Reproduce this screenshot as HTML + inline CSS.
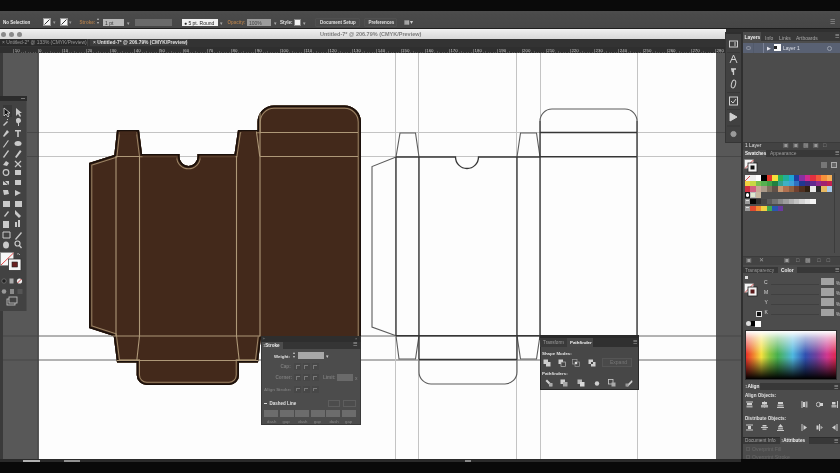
<!DOCTYPE html>
<html><head><meta charset="utf-8">
<style>
*{margin:0;padding:0;box-sizing:border-box}
html,body{width:840px;height:473px;overflow:hidden;background:#0a0a0a;font-family:"Liberation Sans",sans-serif;color:#cfcfcf}
.a{position:absolute}
.t{position:absolute;white-space:nowrap;font-size:5px;line-height:6px}
</style></head><body>
<div class="a" style="left:0;top:0;width:840px;height:473px;overflow:hidden;filter:blur(0.4px)">

<!-- control bar -->
<div class="a" style="left:0;top:11px;width:840px;height:18px;background:linear-gradient(#4e4e4e 0px,#4a4a4a 3px,#464646 100%)"></div><div class="a" style="left:0;top:28px;width:840px;height:1px;background:#1e1e1e"></div>
<!-- title bar -->
<div class="a" style="left:0;top:29px;width:726px;height:10px;background:linear-gradient(#f0f0f0,#d8d8d8)"></div><div class="a" style="left:0;top:39px;width:726px;height:1px;background:#151515"></div>
<!-- tab bar -->
<div class="a" style="left:0;top:39px;width:726px;height:8px;background:#333333"></div>
<!-- ruler bg -->
<div class="a" style="left:0;top:47px;width:726px;height:6px;background:#2f2f2f"></div>

<!-- control bar contents -->
<div class="t" style="left:3px;top:19.5px;font-size:4.5px;color:#e8e8e8;font-weight:bold">No Selection</div>
<div class="a" style="left:43px;top:18.3px;width:8px;height:8px;background:#f4f4f4;border:0.6px solid #999"></div>
<svg class="a" style="left:43px;top:18.3px" width="8" height="8"><path d="M1.5,6.5L6.5,1.5" stroke="#333" stroke-width="1"/></svg>
<div class="t" style="left:52.5px;top:19.5px;font-size:4.5px;color:#999">&#9662;</div>
<div class="a" style="left:59.5px;top:18.3px;width:8px;height:8px;background:#f4f4f4;border:0.6px solid #999"></div>
<svg class="a" style="left:59.5px;top:18.3px" width="8" height="8"><path d="M1.5,6.5L6.5,1.5" stroke="#333" stroke-width="1"/></svg>
<div class="t" style="left:69px;top:19.5px;font-size:4.5px;color:#999">&#9662;</div>
<div class="t" style="left:79.5px;top:19.5px;font-size:4.6px;color:#a87a4c;font-weight:bold">Stroke:</div>
<div class="t" style="left:97px;top:17px;font-size:4px;line-height:4px;color:#bbb">&#9652;<br>&#9662;</div>
<div class="a" style="left:103px;top:19px;width:21px;height:7px;background:#b8b8b8"></div>
<div class="t" style="left:105px;top:19.5px;font-size:5px;color:#333">1 pt</div>
<div class="t" style="left:126.5px;top:19.5px;font-size:5px;color:#aaa">&#9662;</div>
<div class="a" style="left:135px;top:19px;width:37px;height:7px;background:#6a6a6a"></div>
<div class="a" style="left:182px;top:19px;width:35.5px;height:7px;background:#f2f2f2"></div>
<div class="t" style="left:184px;top:19.5px;font-size:5px;color:#222">&#9679; 5 pt. Round</div>
<div class="t" style="left:219.5px;top:19.5px;font-size:5px;color:#aaa">&#9662;</div>
<div class="t" style="left:227.5px;top:19.5px;font-size:4.5px;color:#a87a4c;font-weight:bold">Opacity:</div>
<div class="a" style="left:247px;top:19px;width:24px;height:7px;background:#9c9c9c"></div>
<div class="t" style="left:249px;top:19.5px;font-size:5px;color:#444">100%</div>
<div class="t" style="left:273.5px;top:19.5px;font-size:5px;color:#aaa">&#9662;</div>
<div class="t" style="left:280px;top:19.5px;font-size:4.6px;color:#e0e0e0;font-weight:bold">Style:</div>
<div class="a" style="left:294px;top:19px;width:7px;height:7px;background:#f2f2f2;border:1px solid #888"></div>
<div class="t" style="left:302.5px;top:19.5px;font-size:5px;color:#aaa">&#9662;</div>
<div class="a" style="left:315px;top:17.5px;width:45px;height:9px;background:#4a4a4a;border:1px solid #505050;border-radius:1px"></div>
<div class="t" style="left:320px;top:19.5px;font-size:4.5px;color:#e0e0e0;font-weight:bold">Document Setup</div>
<div class="a" style="left:363.5px;top:17.5px;width:33px;height:9px;background:#4a4a4a;border:1px solid #505050;border-radius:1px"></div>
<div class="t" style="left:368.5px;top:19.5px;font-size:4.5px;color:#e0e0e0;font-weight:bold">Preferences</div>
<div class="t" style="left:404px;top:18.5px;font-size:6px;color:#ccc">&#9638;&#9662;</div>
<div class="t" style="left:830px;top:18.5px;font-size:6px;color:#aaa">&#9776;</div>

<!-- title bar contents -->
<div class="a" style="left:0.5px;top:31.5px;width:5px;height:5px;border-radius:50%;background:#8a8a8a"></div>
<div class="a" style="left:8.5px;top:31.5px;width:5px;height:5px;border-radius:50%;background:#8a8a8a"></div>
<div class="a" style="left:16.5px;top:31.5px;width:5px;height:5px;border-radius:50%;background:#8a8a8a"></div>
<div class="t" style="left:320px;top:31px;font-size:5.5px;color:#7c7c7c;font-weight:bold">Untitled-7* @ 206.79% (CMYK/Preview)</div>

<!-- tabs -->
<div class="a" style="left:0;top:39px;width:88px;height:7px;background:#2a2a2a;border-right:1px solid #444"></div>
<div class="t" style="left:2px;top:40px;font-size:4.9px;color:#9a9a9a">&#215; Untitled-2* @ 133% (CMYK/Preview)</div>
<div class="a" style="left:90px;top:39px;width:98px;height:7px;background:#3c3c3c"></div>
<div class="t" style="left:93px;top:40px;font-size:4.9px;color:#e0e0e0">&#215; <b>Untitled-7* @ 206.79% (CMYK/Preview)</b></div>

<!-- ruler --><div class="t" style="left:14.8px;top:47.6px;font-size:4.4px;color:#c8c8c8">10</div><div class="a" style="left:13.3px;top:49px;width:0.8px;height:4px;background:#6a6a6a"></div><div class="a" style="left:15.7px;top:51.8px;width:0.7px;height:1.2px;background:#555"></div><div class="a" style="left:18.1px;top:51.8px;width:0.7px;height:1.2px;background:#555"></div><div class="a" style="left:20.6px;top:51.8px;width:0.7px;height:1.2px;background:#555"></div><div class="a" style="left:23.0px;top:51.8px;width:0.7px;height:1.2px;background:#555"></div><div class="a" style="left:25.4px;top:51.0px;width:0.7px;height:2.0px;background:#555"></div><div class="a" style="left:27.8px;top:51.8px;width:0.7px;height:1.2px;background:#555"></div><div class="a" style="left:30.2px;top:51.8px;width:0.7px;height:1.2px;background:#555"></div><div class="a" style="left:32.7px;top:51.8px;width:0.7px;height:1.2px;background:#555"></div><div class="a" style="left:35.1px;top:51.8px;width:0.7px;height:1.2px;background:#555"></div><div class="t" style="left:39.0px;top:47.6px;font-size:4.4px;color:#c8c8c8">0</div><div class="a" style="left:37.5px;top:49px;width:0.8px;height:4px;background:#6a6a6a"></div><div class="a" style="left:39.9px;top:51.8px;width:0.7px;height:1.2px;background:#555"></div><div class="a" style="left:42.3px;top:51.8px;width:0.7px;height:1.2px;background:#555"></div><div class="a" style="left:44.8px;top:51.8px;width:0.7px;height:1.2px;background:#555"></div><div class="a" style="left:47.2px;top:51.8px;width:0.7px;height:1.2px;background:#555"></div><div class="a" style="left:49.6px;top:51.0px;width:0.7px;height:2.0px;background:#555"></div><div class="a" style="left:52.0px;top:51.8px;width:0.7px;height:1.2px;background:#555"></div><div class="a" style="left:54.4px;top:51.8px;width:0.7px;height:1.2px;background:#555"></div><div class="a" style="left:56.9px;top:51.8px;width:0.7px;height:1.2px;background:#555"></div><div class="a" style="left:59.3px;top:51.8px;width:0.7px;height:1.2px;background:#555"></div><div class="t" style="left:63.2px;top:47.6px;font-size:4.4px;color:#c8c8c8">10</div><div class="a" style="left:61.7px;top:49px;width:0.8px;height:4px;background:#6a6a6a"></div><div class="a" style="left:64.1px;top:51.8px;width:0.7px;height:1.2px;background:#555"></div><div class="a" style="left:66.5px;top:51.8px;width:0.7px;height:1.2px;background:#555"></div><div class="a" style="left:69.0px;top:51.8px;width:0.7px;height:1.2px;background:#555"></div><div class="a" style="left:71.4px;top:51.8px;width:0.7px;height:1.2px;background:#555"></div><div class="a" style="left:73.8px;top:51.0px;width:0.7px;height:2.0px;background:#555"></div><div class="a" style="left:76.2px;top:51.8px;width:0.7px;height:1.2px;background:#555"></div><div class="a" style="left:78.6px;top:51.8px;width:0.7px;height:1.2px;background:#555"></div><div class="a" style="left:81.1px;top:51.8px;width:0.7px;height:1.2px;background:#555"></div><div class="a" style="left:83.5px;top:51.8px;width:0.7px;height:1.2px;background:#555"></div><div class="t" style="left:87.4px;top:47.6px;font-size:4.4px;color:#c8c8c8">20</div><div class="a" style="left:85.9px;top:49px;width:0.8px;height:4px;background:#6a6a6a"></div><div class="a" style="left:88.3px;top:51.8px;width:0.7px;height:1.2px;background:#555"></div><div class="a" style="left:90.7px;top:51.8px;width:0.7px;height:1.2px;background:#555"></div><div class="a" style="left:93.2px;top:51.8px;width:0.7px;height:1.2px;background:#555"></div><div class="a" style="left:95.6px;top:51.8px;width:0.7px;height:1.2px;background:#555"></div><div class="a" style="left:98.0px;top:51.0px;width:0.7px;height:2.0px;background:#555"></div><div class="a" style="left:100.4px;top:51.8px;width:0.7px;height:1.2px;background:#555"></div><div class="a" style="left:102.8px;top:51.8px;width:0.7px;height:1.2px;background:#555"></div><div class="a" style="left:105.3px;top:51.8px;width:0.7px;height:1.2px;background:#555"></div><div class="a" style="left:107.7px;top:51.8px;width:0.7px;height:1.2px;background:#555"></div><div class="t" style="left:111.6px;top:47.6px;font-size:4.4px;color:#c8c8c8">30</div><div class="a" style="left:110.1px;top:49px;width:0.8px;height:4px;background:#6a6a6a"></div><div class="a" style="left:112.5px;top:51.8px;width:0.7px;height:1.2px;background:#555"></div><div class="a" style="left:114.9px;top:51.8px;width:0.7px;height:1.2px;background:#555"></div><div class="a" style="left:117.4px;top:51.8px;width:0.7px;height:1.2px;background:#555"></div><div class="a" style="left:119.8px;top:51.8px;width:0.7px;height:1.2px;background:#555"></div><div class="a" style="left:122.2px;top:51.0px;width:0.7px;height:2.0px;background:#555"></div><div class="a" style="left:124.6px;top:51.8px;width:0.7px;height:1.2px;background:#555"></div><div class="a" style="left:127.0px;top:51.8px;width:0.7px;height:1.2px;background:#555"></div><div class="a" style="left:129.5px;top:51.8px;width:0.7px;height:1.2px;background:#555"></div><div class="a" style="left:131.9px;top:51.8px;width:0.7px;height:1.2px;background:#555"></div><div class="t" style="left:135.8px;top:47.6px;font-size:4.4px;color:#c8c8c8">40</div><div class="a" style="left:134.3px;top:49px;width:0.8px;height:4px;background:#6a6a6a"></div><div class="a" style="left:136.7px;top:51.8px;width:0.7px;height:1.2px;background:#555"></div><div class="a" style="left:139.1px;top:51.8px;width:0.7px;height:1.2px;background:#555"></div><div class="a" style="left:141.6px;top:51.8px;width:0.7px;height:1.2px;background:#555"></div><div class="a" style="left:144.0px;top:51.8px;width:0.7px;height:1.2px;background:#555"></div><div class="a" style="left:146.4px;top:51.0px;width:0.7px;height:2.0px;background:#555"></div><div class="a" style="left:148.8px;top:51.8px;width:0.7px;height:1.2px;background:#555"></div><div class="a" style="left:151.2px;top:51.8px;width:0.7px;height:1.2px;background:#555"></div><div class="a" style="left:153.7px;top:51.8px;width:0.7px;height:1.2px;background:#555"></div><div class="a" style="left:156.1px;top:51.8px;width:0.7px;height:1.2px;background:#555"></div><div class="t" style="left:160.0px;top:47.6px;font-size:4.4px;color:#c8c8c8">50</div><div class="a" style="left:158.5px;top:49px;width:0.8px;height:4px;background:#6a6a6a"></div><div class="a" style="left:160.9px;top:51.8px;width:0.7px;height:1.2px;background:#555"></div><div class="a" style="left:163.3px;top:51.8px;width:0.7px;height:1.2px;background:#555"></div><div class="a" style="left:165.8px;top:51.8px;width:0.7px;height:1.2px;background:#555"></div><div class="a" style="left:168.2px;top:51.8px;width:0.7px;height:1.2px;background:#555"></div><div class="a" style="left:170.6px;top:51.0px;width:0.7px;height:2.0px;background:#555"></div><div class="a" style="left:173.0px;top:51.8px;width:0.7px;height:1.2px;background:#555"></div><div class="a" style="left:175.4px;top:51.8px;width:0.7px;height:1.2px;background:#555"></div><div class="a" style="left:177.9px;top:51.8px;width:0.7px;height:1.2px;background:#555"></div><div class="a" style="left:180.3px;top:51.8px;width:0.7px;height:1.2px;background:#555"></div><div class="t" style="left:184.2px;top:47.6px;font-size:4.4px;color:#c8c8c8">60</div><div class="a" style="left:182.7px;top:49px;width:0.8px;height:4px;background:#6a6a6a"></div><div class="a" style="left:185.1px;top:51.8px;width:0.7px;height:1.2px;background:#555"></div><div class="a" style="left:187.5px;top:51.8px;width:0.7px;height:1.2px;background:#555"></div><div class="a" style="left:190.0px;top:51.8px;width:0.7px;height:1.2px;background:#555"></div><div class="a" style="left:192.4px;top:51.8px;width:0.7px;height:1.2px;background:#555"></div><div class="a" style="left:194.8px;top:51.0px;width:0.7px;height:2.0px;background:#555"></div><div class="a" style="left:197.2px;top:51.8px;width:0.7px;height:1.2px;background:#555"></div><div class="a" style="left:199.6px;top:51.8px;width:0.7px;height:1.2px;background:#555"></div><div class="a" style="left:202.1px;top:51.8px;width:0.7px;height:1.2px;background:#555"></div><div class="a" style="left:204.5px;top:51.8px;width:0.7px;height:1.2px;background:#555"></div><div class="t" style="left:208.4px;top:47.6px;font-size:4.4px;color:#c8c8c8">70</div><div class="a" style="left:206.9px;top:49px;width:0.8px;height:4px;background:#6a6a6a"></div><div class="a" style="left:209.3px;top:51.8px;width:0.7px;height:1.2px;background:#555"></div><div class="a" style="left:211.7px;top:51.8px;width:0.7px;height:1.2px;background:#555"></div><div class="a" style="left:214.2px;top:51.8px;width:0.7px;height:1.2px;background:#555"></div><div class="a" style="left:216.6px;top:51.8px;width:0.7px;height:1.2px;background:#555"></div><div class="a" style="left:219.0px;top:51.0px;width:0.7px;height:2.0px;background:#555"></div><div class="a" style="left:221.4px;top:51.8px;width:0.7px;height:1.2px;background:#555"></div><div class="a" style="left:223.8px;top:51.8px;width:0.7px;height:1.2px;background:#555"></div><div class="a" style="left:226.3px;top:51.8px;width:0.7px;height:1.2px;background:#555"></div><div class="a" style="left:228.7px;top:51.8px;width:0.7px;height:1.2px;background:#555"></div><div class="t" style="left:232.6px;top:47.6px;font-size:4.4px;color:#c8c8c8">80</div><div class="a" style="left:231.1px;top:49px;width:0.8px;height:4px;background:#6a6a6a"></div><div class="a" style="left:233.5px;top:51.8px;width:0.7px;height:1.2px;background:#555"></div><div class="a" style="left:235.9px;top:51.8px;width:0.7px;height:1.2px;background:#555"></div><div class="a" style="left:238.4px;top:51.8px;width:0.7px;height:1.2px;background:#555"></div><div class="a" style="left:240.8px;top:51.8px;width:0.7px;height:1.2px;background:#555"></div><div class="a" style="left:243.2px;top:51.0px;width:0.7px;height:2.0px;background:#555"></div><div class="a" style="left:245.6px;top:51.8px;width:0.7px;height:1.2px;background:#555"></div><div class="a" style="left:248.0px;top:51.8px;width:0.7px;height:1.2px;background:#555"></div><div class="a" style="left:250.5px;top:51.8px;width:0.7px;height:1.2px;background:#555"></div><div class="a" style="left:252.9px;top:51.8px;width:0.7px;height:1.2px;background:#555"></div><div class="t" style="left:256.8px;top:47.6px;font-size:4.4px;color:#c8c8c8">90</div><div class="a" style="left:255.3px;top:49px;width:0.8px;height:4px;background:#6a6a6a"></div><div class="a" style="left:257.7px;top:51.8px;width:0.7px;height:1.2px;background:#555"></div><div class="a" style="left:260.1px;top:51.8px;width:0.7px;height:1.2px;background:#555"></div><div class="a" style="left:262.6px;top:51.8px;width:0.7px;height:1.2px;background:#555"></div><div class="a" style="left:265.0px;top:51.8px;width:0.7px;height:1.2px;background:#555"></div><div class="a" style="left:267.4px;top:51.0px;width:0.7px;height:2.0px;background:#555"></div><div class="a" style="left:269.8px;top:51.8px;width:0.7px;height:1.2px;background:#555"></div><div class="a" style="left:272.2px;top:51.8px;width:0.7px;height:1.2px;background:#555"></div><div class="a" style="left:274.7px;top:51.8px;width:0.7px;height:1.2px;background:#555"></div><div class="a" style="left:277.1px;top:51.8px;width:0.7px;height:1.2px;background:#555"></div><div class="t" style="left:281.0px;top:47.6px;font-size:4.4px;color:#c8c8c8">100</div><div class="a" style="left:279.5px;top:49px;width:0.8px;height:4px;background:#6a6a6a"></div><div class="a" style="left:281.9px;top:51.8px;width:0.7px;height:1.2px;background:#555"></div><div class="a" style="left:284.3px;top:51.8px;width:0.7px;height:1.2px;background:#555"></div><div class="a" style="left:286.8px;top:51.8px;width:0.7px;height:1.2px;background:#555"></div><div class="a" style="left:289.2px;top:51.8px;width:0.7px;height:1.2px;background:#555"></div><div class="a" style="left:291.6px;top:51.0px;width:0.7px;height:2.0px;background:#555"></div><div class="a" style="left:294.0px;top:51.8px;width:0.7px;height:1.2px;background:#555"></div><div class="a" style="left:296.4px;top:51.8px;width:0.7px;height:1.2px;background:#555"></div><div class="a" style="left:298.9px;top:51.8px;width:0.7px;height:1.2px;background:#555"></div><div class="a" style="left:301.3px;top:51.8px;width:0.7px;height:1.2px;background:#555"></div><div class="t" style="left:305.2px;top:47.6px;font-size:4.4px;color:#c8c8c8">110</div><div class="a" style="left:303.7px;top:49px;width:0.8px;height:4px;background:#6a6a6a"></div><div class="a" style="left:306.1px;top:51.8px;width:0.7px;height:1.2px;background:#555"></div><div class="a" style="left:308.5px;top:51.8px;width:0.7px;height:1.2px;background:#555"></div><div class="a" style="left:311.0px;top:51.8px;width:0.7px;height:1.2px;background:#555"></div><div class="a" style="left:313.4px;top:51.8px;width:0.7px;height:1.2px;background:#555"></div><div class="a" style="left:315.8px;top:51.0px;width:0.7px;height:2.0px;background:#555"></div><div class="a" style="left:318.2px;top:51.8px;width:0.7px;height:1.2px;background:#555"></div><div class="a" style="left:320.6px;top:51.8px;width:0.7px;height:1.2px;background:#555"></div><div class="a" style="left:323.1px;top:51.8px;width:0.7px;height:1.2px;background:#555"></div><div class="a" style="left:325.5px;top:51.8px;width:0.7px;height:1.2px;background:#555"></div><div class="t" style="left:329.4px;top:47.6px;font-size:4.4px;color:#c8c8c8">120</div><div class="a" style="left:327.9px;top:49px;width:0.8px;height:4px;background:#6a6a6a"></div><div class="a" style="left:330.3px;top:51.8px;width:0.7px;height:1.2px;background:#555"></div><div class="a" style="left:332.7px;top:51.8px;width:0.7px;height:1.2px;background:#555"></div><div class="a" style="left:335.2px;top:51.8px;width:0.7px;height:1.2px;background:#555"></div><div class="a" style="left:337.6px;top:51.8px;width:0.7px;height:1.2px;background:#555"></div><div class="a" style="left:340.0px;top:51.0px;width:0.7px;height:2.0px;background:#555"></div><div class="a" style="left:342.4px;top:51.8px;width:0.7px;height:1.2px;background:#555"></div><div class="a" style="left:344.8px;top:51.8px;width:0.7px;height:1.2px;background:#555"></div><div class="a" style="left:347.3px;top:51.8px;width:0.7px;height:1.2px;background:#555"></div><div class="a" style="left:349.7px;top:51.8px;width:0.7px;height:1.2px;background:#555"></div><div class="t" style="left:353.6px;top:47.6px;font-size:4.4px;color:#c8c8c8">130</div><div class="a" style="left:352.1px;top:49px;width:0.8px;height:4px;background:#6a6a6a"></div><div class="a" style="left:354.5px;top:51.8px;width:0.7px;height:1.2px;background:#555"></div><div class="a" style="left:356.9px;top:51.8px;width:0.7px;height:1.2px;background:#555"></div><div class="a" style="left:359.4px;top:51.8px;width:0.7px;height:1.2px;background:#555"></div><div class="a" style="left:361.8px;top:51.8px;width:0.7px;height:1.2px;background:#555"></div><div class="a" style="left:364.2px;top:51.0px;width:0.7px;height:2.0px;background:#555"></div><div class="a" style="left:366.6px;top:51.8px;width:0.7px;height:1.2px;background:#555"></div><div class="a" style="left:369.0px;top:51.8px;width:0.7px;height:1.2px;background:#555"></div><div class="a" style="left:371.5px;top:51.8px;width:0.7px;height:1.2px;background:#555"></div><div class="a" style="left:373.9px;top:51.8px;width:0.7px;height:1.2px;background:#555"></div><div class="t" style="left:377.8px;top:47.6px;font-size:4.4px;color:#c8c8c8">140</div><div class="a" style="left:376.3px;top:49px;width:0.8px;height:4px;background:#6a6a6a"></div><div class="a" style="left:378.7px;top:51.8px;width:0.7px;height:1.2px;background:#555"></div><div class="a" style="left:381.1px;top:51.8px;width:0.7px;height:1.2px;background:#555"></div><div class="a" style="left:383.6px;top:51.8px;width:0.7px;height:1.2px;background:#555"></div><div class="a" style="left:386.0px;top:51.8px;width:0.7px;height:1.2px;background:#555"></div><div class="a" style="left:388.4px;top:51.0px;width:0.7px;height:2.0px;background:#555"></div><div class="a" style="left:390.8px;top:51.8px;width:0.7px;height:1.2px;background:#555"></div><div class="a" style="left:393.2px;top:51.8px;width:0.7px;height:1.2px;background:#555"></div><div class="a" style="left:395.7px;top:51.8px;width:0.7px;height:1.2px;background:#555"></div><div class="a" style="left:398.1px;top:51.8px;width:0.7px;height:1.2px;background:#555"></div><div class="t" style="left:402.0px;top:47.6px;font-size:4.4px;color:#c8c8c8">150</div><div class="a" style="left:400.5px;top:49px;width:0.8px;height:4px;background:#6a6a6a"></div><div class="a" style="left:402.9px;top:51.8px;width:0.7px;height:1.2px;background:#555"></div><div class="a" style="left:405.3px;top:51.8px;width:0.7px;height:1.2px;background:#555"></div><div class="a" style="left:407.8px;top:51.8px;width:0.7px;height:1.2px;background:#555"></div><div class="a" style="left:410.2px;top:51.8px;width:0.7px;height:1.2px;background:#555"></div><div class="a" style="left:412.6px;top:51.0px;width:0.7px;height:2.0px;background:#555"></div><div class="a" style="left:415.0px;top:51.8px;width:0.7px;height:1.2px;background:#555"></div><div class="a" style="left:417.4px;top:51.8px;width:0.7px;height:1.2px;background:#555"></div><div class="a" style="left:419.9px;top:51.8px;width:0.7px;height:1.2px;background:#555"></div><div class="a" style="left:422.3px;top:51.8px;width:0.7px;height:1.2px;background:#555"></div><div class="t" style="left:426.2px;top:47.6px;font-size:4.4px;color:#c8c8c8">160</div><div class="a" style="left:424.7px;top:49px;width:0.8px;height:4px;background:#6a6a6a"></div><div class="a" style="left:427.1px;top:51.8px;width:0.7px;height:1.2px;background:#555"></div><div class="a" style="left:429.5px;top:51.8px;width:0.7px;height:1.2px;background:#555"></div><div class="a" style="left:432.0px;top:51.8px;width:0.7px;height:1.2px;background:#555"></div><div class="a" style="left:434.4px;top:51.8px;width:0.7px;height:1.2px;background:#555"></div><div class="a" style="left:436.8px;top:51.0px;width:0.7px;height:2.0px;background:#555"></div><div class="a" style="left:439.2px;top:51.8px;width:0.7px;height:1.2px;background:#555"></div><div class="a" style="left:441.6px;top:51.8px;width:0.7px;height:1.2px;background:#555"></div><div class="a" style="left:444.1px;top:51.8px;width:0.7px;height:1.2px;background:#555"></div><div class="a" style="left:446.5px;top:51.8px;width:0.7px;height:1.2px;background:#555"></div><div class="t" style="left:450.4px;top:47.6px;font-size:4.4px;color:#c8c8c8">170</div><div class="a" style="left:448.9px;top:49px;width:0.8px;height:4px;background:#6a6a6a"></div><div class="a" style="left:451.3px;top:51.8px;width:0.7px;height:1.2px;background:#555"></div><div class="a" style="left:453.7px;top:51.8px;width:0.7px;height:1.2px;background:#555"></div><div class="a" style="left:456.2px;top:51.8px;width:0.7px;height:1.2px;background:#555"></div><div class="a" style="left:458.6px;top:51.8px;width:0.7px;height:1.2px;background:#555"></div><div class="a" style="left:461.0px;top:51.0px;width:0.7px;height:2.0px;background:#555"></div><div class="a" style="left:463.4px;top:51.8px;width:0.7px;height:1.2px;background:#555"></div><div class="a" style="left:465.8px;top:51.8px;width:0.7px;height:1.2px;background:#555"></div><div class="a" style="left:468.3px;top:51.8px;width:0.7px;height:1.2px;background:#555"></div><div class="a" style="left:470.7px;top:51.8px;width:0.7px;height:1.2px;background:#555"></div><div class="t" style="left:474.6px;top:47.6px;font-size:4.4px;color:#c8c8c8">180</div><div class="a" style="left:473.1px;top:49px;width:0.8px;height:4px;background:#6a6a6a"></div><div class="a" style="left:475.5px;top:51.8px;width:0.7px;height:1.2px;background:#555"></div><div class="a" style="left:477.9px;top:51.8px;width:0.7px;height:1.2px;background:#555"></div><div class="a" style="left:480.4px;top:51.8px;width:0.7px;height:1.2px;background:#555"></div><div class="a" style="left:482.8px;top:51.8px;width:0.7px;height:1.2px;background:#555"></div><div class="a" style="left:485.2px;top:51.0px;width:0.7px;height:2.0px;background:#555"></div><div class="a" style="left:487.6px;top:51.8px;width:0.7px;height:1.2px;background:#555"></div><div class="a" style="left:490.0px;top:51.8px;width:0.7px;height:1.2px;background:#555"></div><div class="a" style="left:492.5px;top:51.8px;width:0.7px;height:1.2px;background:#555"></div><div class="a" style="left:494.9px;top:51.8px;width:0.7px;height:1.2px;background:#555"></div><div class="t" style="left:498.8px;top:47.6px;font-size:4.4px;color:#c8c8c8">190</div><div class="a" style="left:497.3px;top:49px;width:0.8px;height:4px;background:#6a6a6a"></div><div class="a" style="left:499.7px;top:51.8px;width:0.7px;height:1.2px;background:#555"></div><div class="a" style="left:502.1px;top:51.8px;width:0.7px;height:1.2px;background:#555"></div><div class="a" style="left:504.6px;top:51.8px;width:0.7px;height:1.2px;background:#555"></div><div class="a" style="left:507.0px;top:51.8px;width:0.7px;height:1.2px;background:#555"></div><div class="a" style="left:509.4px;top:51.0px;width:0.7px;height:2.0px;background:#555"></div><div class="a" style="left:511.8px;top:51.8px;width:0.7px;height:1.2px;background:#555"></div><div class="a" style="left:514.2px;top:51.8px;width:0.7px;height:1.2px;background:#555"></div><div class="a" style="left:516.7px;top:51.8px;width:0.7px;height:1.2px;background:#555"></div><div class="a" style="left:519.1px;top:51.8px;width:0.7px;height:1.2px;background:#555"></div><div class="t" style="left:523.0px;top:47.6px;font-size:4.4px;color:#c8c8c8">200</div><div class="a" style="left:521.5px;top:49px;width:0.8px;height:4px;background:#6a6a6a"></div><div class="a" style="left:523.9px;top:51.8px;width:0.7px;height:1.2px;background:#555"></div><div class="a" style="left:526.3px;top:51.8px;width:0.7px;height:1.2px;background:#555"></div><div class="a" style="left:528.8px;top:51.8px;width:0.7px;height:1.2px;background:#555"></div><div class="a" style="left:531.2px;top:51.8px;width:0.7px;height:1.2px;background:#555"></div><div class="a" style="left:533.6px;top:51.0px;width:0.7px;height:2.0px;background:#555"></div><div class="a" style="left:536.0px;top:51.8px;width:0.7px;height:1.2px;background:#555"></div><div class="a" style="left:538.4px;top:51.8px;width:0.7px;height:1.2px;background:#555"></div><div class="a" style="left:540.9px;top:51.8px;width:0.7px;height:1.2px;background:#555"></div><div class="a" style="left:543.3px;top:51.8px;width:0.7px;height:1.2px;background:#555"></div><div class="t" style="left:547.2px;top:47.6px;font-size:4.4px;color:#c8c8c8">210</div><div class="a" style="left:545.7px;top:49px;width:0.8px;height:4px;background:#6a6a6a"></div><div class="a" style="left:548.1px;top:51.8px;width:0.7px;height:1.2px;background:#555"></div><div class="a" style="left:550.5px;top:51.8px;width:0.7px;height:1.2px;background:#555"></div><div class="a" style="left:553.0px;top:51.8px;width:0.7px;height:1.2px;background:#555"></div><div class="a" style="left:555.4px;top:51.8px;width:0.7px;height:1.2px;background:#555"></div><div class="a" style="left:557.8px;top:51.0px;width:0.7px;height:2.0px;background:#555"></div><div class="a" style="left:560.2px;top:51.8px;width:0.7px;height:1.2px;background:#555"></div><div class="a" style="left:562.6px;top:51.8px;width:0.7px;height:1.2px;background:#555"></div><div class="a" style="left:565.1px;top:51.8px;width:0.7px;height:1.2px;background:#555"></div><div class="a" style="left:567.5px;top:51.8px;width:0.7px;height:1.2px;background:#555"></div><div class="t" style="left:571.4px;top:47.6px;font-size:4.4px;color:#c8c8c8">220</div><div class="a" style="left:569.9px;top:49px;width:0.8px;height:4px;background:#6a6a6a"></div><div class="a" style="left:572.3px;top:51.8px;width:0.7px;height:1.2px;background:#555"></div><div class="a" style="left:574.7px;top:51.8px;width:0.7px;height:1.2px;background:#555"></div><div class="a" style="left:577.2px;top:51.8px;width:0.7px;height:1.2px;background:#555"></div><div class="a" style="left:579.6px;top:51.8px;width:0.7px;height:1.2px;background:#555"></div><div class="a" style="left:582.0px;top:51.0px;width:0.7px;height:2.0px;background:#555"></div><div class="a" style="left:584.4px;top:51.8px;width:0.7px;height:1.2px;background:#555"></div><div class="a" style="left:586.8px;top:51.8px;width:0.7px;height:1.2px;background:#555"></div><div class="a" style="left:589.3px;top:51.8px;width:0.7px;height:1.2px;background:#555"></div><div class="a" style="left:591.7px;top:51.8px;width:0.7px;height:1.2px;background:#555"></div><div class="t" style="left:595.6px;top:47.6px;font-size:4.4px;color:#c8c8c8">230</div><div class="a" style="left:594.1px;top:49px;width:0.8px;height:4px;background:#6a6a6a"></div><div class="a" style="left:596.5px;top:51.8px;width:0.7px;height:1.2px;background:#555"></div><div class="a" style="left:598.9px;top:51.8px;width:0.7px;height:1.2px;background:#555"></div><div class="a" style="left:601.4px;top:51.8px;width:0.7px;height:1.2px;background:#555"></div><div class="a" style="left:603.8px;top:51.8px;width:0.7px;height:1.2px;background:#555"></div><div class="a" style="left:606.2px;top:51.0px;width:0.7px;height:2.0px;background:#555"></div><div class="a" style="left:608.6px;top:51.8px;width:0.7px;height:1.2px;background:#555"></div><div class="a" style="left:611.0px;top:51.8px;width:0.7px;height:1.2px;background:#555"></div><div class="a" style="left:613.5px;top:51.8px;width:0.7px;height:1.2px;background:#555"></div><div class="a" style="left:615.9px;top:51.8px;width:0.7px;height:1.2px;background:#555"></div><div class="t" style="left:619.8px;top:47.6px;font-size:4.4px;color:#c8c8c8">240</div><div class="a" style="left:618.3px;top:49px;width:0.8px;height:4px;background:#6a6a6a"></div><div class="a" style="left:620.7px;top:51.8px;width:0.7px;height:1.2px;background:#555"></div><div class="a" style="left:623.1px;top:51.8px;width:0.7px;height:1.2px;background:#555"></div><div class="a" style="left:625.6px;top:51.8px;width:0.7px;height:1.2px;background:#555"></div><div class="a" style="left:628.0px;top:51.8px;width:0.7px;height:1.2px;background:#555"></div><div class="a" style="left:630.4px;top:51.0px;width:0.7px;height:2.0px;background:#555"></div><div class="a" style="left:632.8px;top:51.8px;width:0.7px;height:1.2px;background:#555"></div><div class="a" style="left:635.2px;top:51.8px;width:0.7px;height:1.2px;background:#555"></div><div class="a" style="left:637.7px;top:51.8px;width:0.7px;height:1.2px;background:#555"></div><div class="a" style="left:640.1px;top:51.8px;width:0.7px;height:1.2px;background:#555"></div><div class="t" style="left:644.0px;top:47.6px;font-size:4.4px;color:#c8c8c8">250</div><div class="a" style="left:642.5px;top:49px;width:0.8px;height:4px;background:#6a6a6a"></div><div class="a" style="left:644.9px;top:51.8px;width:0.7px;height:1.2px;background:#555"></div><div class="a" style="left:647.3px;top:51.8px;width:0.7px;height:1.2px;background:#555"></div><div class="a" style="left:649.8px;top:51.8px;width:0.7px;height:1.2px;background:#555"></div><div class="a" style="left:652.2px;top:51.8px;width:0.7px;height:1.2px;background:#555"></div><div class="a" style="left:654.6px;top:51.0px;width:0.7px;height:2.0px;background:#555"></div><div class="a" style="left:657.0px;top:51.8px;width:0.7px;height:1.2px;background:#555"></div><div class="a" style="left:659.4px;top:51.8px;width:0.7px;height:1.2px;background:#555"></div><div class="a" style="left:661.9px;top:51.8px;width:0.7px;height:1.2px;background:#555"></div><div class="a" style="left:664.3px;top:51.8px;width:0.7px;height:1.2px;background:#555"></div><div class="t" style="left:668.2px;top:47.6px;font-size:4.4px;color:#c8c8c8">260</div><div class="a" style="left:666.7px;top:49px;width:0.8px;height:4px;background:#6a6a6a"></div><div class="a" style="left:669.1px;top:51.8px;width:0.7px;height:1.2px;background:#555"></div><div class="a" style="left:671.5px;top:51.8px;width:0.7px;height:1.2px;background:#555"></div><div class="a" style="left:674.0px;top:51.8px;width:0.7px;height:1.2px;background:#555"></div><div class="a" style="left:676.4px;top:51.8px;width:0.7px;height:1.2px;background:#555"></div><div class="a" style="left:678.8px;top:51.0px;width:0.7px;height:2.0px;background:#555"></div><div class="a" style="left:681.2px;top:51.8px;width:0.7px;height:1.2px;background:#555"></div><div class="a" style="left:683.6px;top:51.8px;width:0.7px;height:1.2px;background:#555"></div><div class="a" style="left:686.1px;top:51.8px;width:0.7px;height:1.2px;background:#555"></div><div class="a" style="left:688.5px;top:51.8px;width:0.7px;height:1.2px;background:#555"></div><div class="t" style="left:692.4px;top:47.6px;font-size:4.4px;color:#c8c8c8">270</div><div class="a" style="left:690.9px;top:49px;width:0.8px;height:4px;background:#6a6a6a"></div><div class="a" style="left:693.3px;top:51.8px;width:0.7px;height:1.2px;background:#555"></div><div class="a" style="left:695.7px;top:51.8px;width:0.7px;height:1.2px;background:#555"></div><div class="a" style="left:698.2px;top:51.8px;width:0.7px;height:1.2px;background:#555"></div><div class="a" style="left:700.6px;top:51.8px;width:0.7px;height:1.2px;background:#555"></div><div class="a" style="left:703.0px;top:51.0px;width:0.7px;height:2.0px;background:#555"></div><div class="a" style="left:705.4px;top:51.8px;width:0.7px;height:1.2px;background:#555"></div><div class="a" style="left:707.8px;top:51.8px;width:0.7px;height:1.2px;background:#555"></div><div class="a" style="left:710.3px;top:51.8px;width:0.7px;height:1.2px;background:#555"></div><div class="a" style="left:712.7px;top:51.8px;width:0.7px;height:1.2px;background:#555"></div><div class="t" style="left:716.6px;top:47.6px;font-size:4.4px;color:#c8c8c8">280</div><div class="a" style="left:715.1px;top:49px;width:0.8px;height:4px;background:#6a6a6a"></div><div class="a" style="left:717.5px;top:51.8px;width:0.7px;height:1.2px;background:#555"></div><div class="a" style="left:719.9px;top:51.8px;width:0.7px;height:1.2px;background:#555"></div><div class="a" style="left:722.4px;top:51.8px;width:0.7px;height:1.2px;background:#555"></div><div class="a" style="left:724.8px;top:51.8px;width:0.7px;height:1.2px;background:#555"></div><div class="a" style="left:727.2px;top:51.0px;width:0.7px;height:2.0px;background:#555"></div><div class="a" style="left:729.6px;top:51.8px;width:0.7px;height:1.2px;background:#555"></div><div class="a" style="left:732.0px;top:51.8px;width:0.7px;height:1.2px;background:#555"></div><div class="a" style="left:734.5px;top:51.8px;width:0.7px;height:1.2px;background:#555"></div><div class="a" style="left:736.9px;top:51.8px;width:0.7px;height:1.2px;background:#555"></div>
<!-- pasteboard -->
<div class="a" style="left:0;top:53px;width:741px;height:406px;background:#585858"></div>
<div class="a" style="left:0;top:53px;width:3px;height:406px;background:#3a3a3a"></div>
<div class="a" style="left:36.5px;top:53px;width:1px;height:406px;background:#4e4e4e"></div>
<!-- canvas -->
<div class="a" style="left:39px;top:53px;width:677px;height:406px;background:#fdfdfd"></div>


<!-- artwork -->
<svg class="a" style="left:0;top:0" width="840" height="473" viewBox="0 0 840 473">
<defs>
<clipPath id="pb"><rect x="3" y="53" width="738" height="406"/></clipPath><clipPath id="cv"><rect x="39" y="53" width="677" height="406"/></clipPath>
<clipPath id="bc"><path id="bp" d="M117,130 L139,130 L142,154 L179.5,154 L179.5,157 A9,9 0 0 0 197.5,157 L197.5,154 L234.5,154 L238,130 L257.5,130 L257.5,122 A16.5,16.5 0 0 1 274,105.5 L344.5,105.5 A16.5,16.5 0 0 1 361,122 L361,342 L261.5,342 L261,337 L258,362.5 L239,362.5 L239,375 A10,10 0 0 1 229,385 L146.7,385 A10,10 0 0 1 136.7,375 L136.7,362.5 L117,362.5 L113.7,336 L89,328 L89,163 L114.3,155 Z"/></clipPath>
</defs>
<g clip-path="url(#pb)" stroke="#474747" stroke-width="1" fill="none">
<path d="M0,132.5H741M0,156.5H741M0,336H741M0,360H741"/>
</g>
<g clip-path="url(#cv)" stroke="#c4c4c4" stroke-width="1" fill="none">
<path d="M0,132.5H741M0,156.5H741M0,336H741M0,360H741M395.5,53V459M418.5,53V459M516.5,53V459M540.5,53V459M637.5,53V459"/>
</g>
<g>
<use href="#bp" fill="#43291b"/>
<g clip-path="url(#bc)" fill="none">
<use href="#bp" stroke="#9c8566" stroke-width="6.6"/>
<use href="#bp" stroke="#43291b" stroke-width="4.6"/>
<use href="#bp" stroke="#1a100b" stroke-width="3"/>
<path fill="#43291b" d="M119.6,131.6 H136.4 L136.7,134.6 H119.3Z M241.4,131.6 H256.6 V134.6 H241Z"/>
<path fill="#43291b" fill-opacity="0.7" d="M142.5,155.2 H177.5 V158.5 H142.5Z M199.5,155.2 H235.5 V158.5 H199.5Z"/>
<path stroke="#ae9878" stroke-width="1.1" d="M256.4,131.5 L259.8,156.5" fill="none"/>
<path stroke="#ae9878" stroke-width="1.1" d="M116,156V336M139.5,156V336L136.8,360.5M236.5,156V336L239.2,360.5M260,108V336M260,132.5H358M116,156.5H139.5M260,156.5H358M92,336H260M116,360.5H260"/>
</g>
</g>
<g fill="none" stroke="#5c5c5c" stroke-width="1.1">
<path d="M396,157 L372,166.5 L372,327 L396,335.7"/>
<path d="M396,157 L400,133 L415.5,133 L419,157"/>
<path d="M517,157 L520.5,133 L536.5,133 L540,157"/>
<path d="M396,335.7 L399,359 L415.5,359 L419,335.7"/>
<path d="M517,335.7 L520.5,359 L536.5,359 L540,335.7"/>
<path d="M419,359.5 V372 A12,12 0 0 0 431,384 H505 A12,12 0 0 0 517,372 V359.5"/>
<path d="M540,121 A12,12 0 0 1 552,109 H625 A12,12 0 0 1 637,121"/>
</g>
<g fill="none" stroke="#363636" stroke-width="1.35">
<path d="M396,157 H455.5 A11.5,11.5 0 0 0 478.5,157 H540"/>
<path d="M396,335.7 H540"/>
<path d="M419,359.5 H517"/>
<path d="M396,157 V335.7 M419,157 V359.5 M517,157 V359.5 M540,121 V340 M637,121 V340"/>
<path d="M540,132.5 H637 M540,156.7 H637"/>
</g>
</svg>



<!-- stroke panel -->
<div class="a" style="left:261px;top:336px;width:100px;height:89px;background:#4c4c4c;border:1px solid #3a3a3a"></div>
<div class="a" style="left:261px;top:336px;width:100px;height:5.5px;background:#2e2e2e"></div>
<div class="t" style="left:262.5px;top:336px;font-size:4px;color:#888">&#187;</div>
<div class="t" style="left:355px;top:336px;font-size:4px;color:#888">&#215;</div>
<div class="a" style="left:261px;top:341.5px;width:100px;height:7px;background:#353535"></div>
<div class="a" style="left:262px;top:341.5px;width:21px;height:7px;background:#4c4c4c"></div>
<div class="t" style="left:263px;top:342.5px;font-size:4.6px;color:#eee;font-weight:bold">&#8597;Stroke</div>
<div class="t" style="left:353px;top:342px;font-size:4.5px;color:#aaa">&#9776;</div>
<div class="t" style="left:274px;top:353.5px;font-size:4.4px;color:#e0e0e0;font-weight:bold">Weight:</div>
<div class="t" style="left:292.5px;top:351px;font-size:3.8px;line-height:4px;color:#ccc">&#9652;<br>&#9662;</div>
<div class="a" style="left:298px;top:352px;width:26px;height:7px;background:#a8a8a8"></div>
<div class="t" style="left:326px;top:353px;font-size:5px;color:#ccc">&#9662;</div>
<div class="t" style="left:280.5px;top:364px;font-size:4.6px;color:#7c7c7c;font-weight:bold">Cap:</div>
<div class="t" style="left:275.5px;top:375px;font-size:4.6px;color:#7c7c7c;font-weight:bold">Corner:</div>
<div class="t" style="left:264px;top:386.5px;font-size:4.4px;color:#7c7c7c;font-weight:bold">Align Stroke:</div>
<div class="t" style="left:323px;top:375px;font-size:4.6px;color:#7c7c7c;font-weight:bold">Limit:</div>
<div class="a" style="left:337px;top:374px;width:16px;height:7px;background:#6a6a6a"></div>
<div class="t" style="left:355px;top:374.5px;font-size:5px;color:#888">x</div>

<div class="a" style="left:294.0px;top:363.0px;width:7px;height:7px;background:#474747"></div><div class="a" style="left:295.5px;top:365.0px;width:4px;height:3.5px;border-top:1px solid #7a7a7a;border-left:1px solid #7a7a7a"></div><div class="a" style="left:302.5px;top:363.0px;width:7px;height:7px;background:#474747"></div><div class="a" style="left:304.0px;top:365.0px;width:4px;height:3.5px;border-top:1px solid #7a7a7a;border-left:1px solid #7a7a7a"></div><div class="a" style="left:311.5px;top:363.0px;width:7px;height:7px;background:#474747"></div><div class="a" style="left:313.0px;top:365.0px;width:4px;height:3.5px;border-top:1px solid #7a7a7a;border-left:1px solid #7a7a7a"></div><div class="a" style="left:294.0px;top:374.0px;width:7px;height:7px;background:#474747"></div><div class="a" style="left:295.5px;top:376.0px;width:4px;height:3.5px;border-top:1px solid #7a7a7a;border-left:1px solid #7a7a7a"></div><div class="a" style="left:302.5px;top:374.0px;width:7px;height:7px;background:#474747"></div><div class="a" style="left:304.0px;top:376.0px;width:4px;height:3.5px;border-top:1px solid #7a7a7a;border-left:1px solid #7a7a7a"></div><div class="a" style="left:311.5px;top:374.0px;width:7px;height:7px;background:#474747"></div><div class="a" style="left:313.0px;top:376.0px;width:4px;height:3.5px;border-top:1px solid #7a7a7a;border-left:1px solid #7a7a7a"></div><div class="a" style="left:294.0px;top:385.5px;width:7px;height:7px;background:#474747"></div><div class="a" style="left:295.5px;top:387.5px;width:4px;height:3.5px;border-top:1px solid #7a7a7a;border-left:1px solid #7a7a7a"></div><div class="a" style="left:302.5px;top:385.5px;width:7px;height:7px;background:#474747"></div><div class="a" style="left:304.0px;top:387.5px;width:4px;height:3.5px;border-top:1px solid #7a7a7a;border-left:1px solid #7a7a7a"></div><div class="a" style="left:311.5px;top:385.5px;width:7px;height:7px;background:#474747"></div><div class="a" style="left:313.0px;top:387.5px;width:4px;height:3.5px;border-top:1px solid #7a7a7a;border-left:1px solid #7a7a7a"></div><div class="a" style="left:264px;top:402.5px;width:3px;height:1px;background:#ddd"></div>
<div class="t" style="left:269.5px;top:401px;font-size:4.5px;color:#e0e0e0;font-weight:bold">Dashed Line</div>
<div class="a" style="left:328px;top:399.5px;width:12px;height:7px;border:1px solid #5e5e5e"></div>
<div class="a" style="left:343px;top:399.5px;width:13px;height:7px;border:1px solid #5e5e5e"></div>
<div class="a" style="left:264.0px;top:410px;width:14px;height:7px;background:#6c6c6c"></div><div class="t" style="left:267.0px;top:418.5px;font-size:4.3px;color:#8a8a8a">dash</div><div class="a" style="left:279.6px;top:410px;width:14px;height:7px;background:#6c6c6c"></div><div class="t" style="left:282.6px;top:418.5px;font-size:4.3px;color:#8a8a8a">gap</div><div class="a" style="left:295.2px;top:410px;width:14px;height:7px;background:#6c6c6c"></div><div class="t" style="left:298.2px;top:418.5px;font-size:4.3px;color:#8a8a8a">dash</div><div class="a" style="left:310.8px;top:410px;width:14px;height:7px;background:#6c6c6c"></div><div class="t" style="left:313.8px;top:418.5px;font-size:4.3px;color:#8a8a8a">gap</div><div class="a" style="left:326.4px;top:410px;width:14px;height:7px;background:#6c6c6c"></div><div class="t" style="left:329.4px;top:418.5px;font-size:4.3px;color:#8a8a8a">dash</div><div class="a" style="left:342.0px;top:410px;width:14px;height:7px;background:#6c6c6c"></div><div class="t" style="left:345.0px;top:418.5px;font-size:4.3px;color:#8a8a8a">gap</div>
<!-- pathfinder panel -->
<div class="a" style="left:539.5px;top:335px;width:99px;height:55px;background:#474747;border:1px solid #2a2a2a"></div>
<div class="a" style="left:539.5px;top:335px;width:99px;height:3px;background:#2a2a2a"></div>
<div class="a" style="left:540px;top:338px;width:98px;height:9px;background:#303030"></div>
<div class="a" style="left:540px;top:338px;width:27px;height:9px;background:#3a3a3a"></div>
<div class="a" style="left:567px;top:338px;width:26px;height:9px;background:#474747"></div>
<div class="t" style="left:543px;top:340px;font-size:4.6px;color:#9c9c9c">Transform</div>
<div class="t" style="left:570px;top:340px;font-size:4.4px;color:#f0f0f0;font-weight:bold">Pathfinder</div>
<div class="t" style="left:633px;top:339.5px;font-size:4.5px;color:#aaa">&#9776;</div>
<div class="t" style="left:542px;top:350.5px;font-size:4.4px;color:#e0e0e0;font-weight:bold">Shape Modes:</div>
<div class="t" style="left:542px;top:370.5px;font-size:4.4px;color:#e0e0e0;font-weight:bold">Pathfinders:</div>
<div class="a" style="left:602px;top:357.5px;width:30px;height:9px;border:1px solid #555;background:#4a4a4a"></div>
<div class="t" style="left:610px;top:359px;font-size:5px;color:#777">Expand</div>

<svg class="a" style="left:542.6px;top:358.5px" width="9" height="9"><path d="M0.5,0.5h4.5v2.5h2.5v4.5h-4.5v-2.5h-2.5z" fill="#cfcfcf"/></svg><svg class="a" style="left:557.7px;top:358.5px" width="9" height="9"><rect x="0.5" y="0.5" width="4.5" height="4.5" fill="#cfcfcf"/><rect x="3" y="3" width="4.5" height="4.5" fill="#474747" stroke="#bbb" stroke-width="0.7"/></svg><svg class="a" style="left:572.0px;top:358.5px" width="9" height="9"><rect x="0.5" y="0.5" width="4.5" height="4.5" fill="none" stroke="#999" stroke-width="0.7"/><rect x="3" y="3" width="4.5" height="4.5" fill="none" stroke="#999" stroke-width="0.7"/><rect x="3" y="3" width="2" height="2" fill="#ddd"/></svg><svg class="a" style="left:587.8px;top:358.5px" width="9" height="9"><path d="M0.5,0.5h4.5v2.5h2.5v4.5h-4.5v-2.5h-2.5z" fill="#cfcfcf"/><rect x="3" y="3" width="2" height="2" fill="#474747"/></svg><svg class="a" style="left:545.0px;top:378.5px" width="9" height="9"><path d="M0.5,2 L2,0.5 L7.5,6 L6,7.5Z" fill="#cfcfcf"/><rect x="4" y="4" width="3.5" height="3.5" fill="#aaa"/></svg><svg class="a" style="left:560.0px;top:378.5px" width="9" height="9"><rect x="0.5" y="0.5" width="4.5" height="4.5" fill="#cfcfcf"/><rect x="3" y="3" width="4.5" height="4.5" fill="#a8a8a8"/></svg><svg class="a" style="left:576.7px;top:378.5px" width="9" height="9"><rect x="0.5" y="0.5" width="4.5" height="4.5" fill="#b8b8b8"/><rect x="3" y="3" width="4.5" height="4.5" fill="#dadada"/></svg><svg class="a" style="left:593.4px;top:378.5px" width="9" height="9"><circle cx="4" cy="4.5" r="2.2" fill="#cfcfcf"/></svg><svg class="a" style="left:608.4px;top:378.5px" width="9" height="9"><rect x="0.5" y="0.5" width="4.5" height="4.5" fill="none" stroke="#ccc" stroke-width="0.8"/><rect x="3.5" y="3.5" width="4" height="4" fill="#aaa"/></svg><svg class="a" style="left:625.0px;top:378.5px" width="9" height="9"><path d="M1,7 L7,1 L7.5,3 L3,7.5Z" fill="#cfcfcf"/><rect x="0.5" y="4.5" width="3" height="3" fill="#999"/></svg>
<!-- toolbox -->
<div class="a" style="left:0;top:96px;width:27px;height:215px;background:#424242;border-right:1px solid #4c4c4c"></div>
<div class="a" style="left:0;top:96px;width:27px;height:5px;background:#2c2c2c"></div>
<div class="a" style="left:21px;top:97.5px;width:4px;height:1px;background:#777"></div>
<div class="a" style="left:3px;top:105px;width:9px;height:12px;background:#383838"></div>
<svg class="a" style="left:0;top:100px" width="27" height="210" viewBox="0 100 27 210">
<g fill="#c9c9c9" stroke="none">
<path d="M4,108 L4,116 L6,114 L8,117 L9,116 L7.5,113 L10,113 Z" fill="#111" stroke="#ddd" stroke-width="0.8"/>
<path d="M16,108 L16,116 L18,114 L20,117 L21,116 L19.5,113 L22,113 Z"/>
<path d="M3,125 L7,121 L8,122 L4,126Z M7,119 l1,0 l0,1 l-1,0z"/>
<path d="M16,121 a2.5,2.5 0 1 1 3,2 l0,3 l-1,0 l0,-2.5 a2.5,2.5 0 0 1 -2,-2.5z"/>
<path d="M3,136 L7,130 L9,132 L4,137Z"/>
<path d="M15,130 H21 V131.5 H18.8 V137 H17.2 V131.5 H15Z"/>
<path d="M3,147 L8,140 L8.8,140.8 L3.8,147.8Z"/>
<ellipse cx="18" cy="143.5" rx="3.5" ry="2.5"/>
<path d="M3,157 L8,150 L9,151 L4,158Z"/>
<path d="M15,157 L20,150 L21.5,151.5 L16.5,158Z"/>
<path d="M3,165 L6,161 L9,163 L7,166 Z"/>
<path d="M15,161 L21,167 M21,161 L15,167" stroke="#c9c9c9" stroke-width="1.2"/>
<circle cx="6" cy="172.5" r="2.8" fill="none" stroke="#c9c9c9" stroke-width="1.2"/>
<rect x="15" y="170" width="6" height="5"/>
<path d="M3,181 L8,185 L3,185Z M5,181 L9,181 L9,185Z"/>
<rect x="15" y="180" width="6" height="5"/>
<path d="M3,190 L8,190 L9,194 L4,195Z"/>
<path d="M15,190 L21,193 L15,196Z"/>
<rect x="3" y="201" width="7" height="6"/>
<rect x="15" y="201" width="7" height="6"/>
<path d="M4,216 L8,211 L9,212 L5,217Z"/>
<path d="M15,210 L21,216 L19,218 L15,214Z"/>
<rect x="3" y="221" width="6" height="7"/>
<path d="M15,227 L15,222 L17,222 L17,227 M18,227 L18,220 L20,220 L20,227Z"/>
<path d="M3,232 H10 V238 H3Z" fill="none" stroke="#c9c9c9" stroke-width="1"/>
<path d="M15,239 L21,232 L22,233 L16,240Z"/>
<ellipse cx="6" cy="245" rx="3" ry="3.5"/>
<circle cx="17.5" cy="243.5" r="2.5" fill="none" stroke="#c9c9c9" stroke-width="1.2"/>
<path d="M19,245 L21.5,248" stroke="#c9c9c9" stroke-width="1.3"/>
<path d="M17,254 q2,-1 3,1" fill="none" stroke="#bbb" stroke-width="0.8"/>
</g>
<rect x="0.5" y="252.5" width="13" height="13" fill="#f6f6f6" stroke="#888" stroke-width="0.6"/>
<path d="M1,265 L13.5,253" stroke="#d33" stroke-width="0.9"/>
<rect x="8.5" y="259" width="12.5" height="11.5" fill="#f4f4f4" stroke="#333" stroke-width="0.8"/>
<rect x="12" y="262" width="5.5" height="5" fill="#6a2020" stroke="#222" stroke-width="0.6"/>
<rect x="0" y="266" width="8" height="5" fill="#424242"/>
<circle cx="4" cy="281" r="2.2" fill="#222" stroke="#999" stroke-width="0.5"/>
<rect x="9.5" y="278.5" width="4" height="5" fill="#aaa"/>
<circle cx="19.5" cy="281" r="2.6" fill="#eee"/>
<path d="M17.5,283 L21.5,279" stroke="#b22" stroke-width="0.8"/>
<circle cx="4" cy="291.5" r="2.3" fill="#999"/>
<rect x="10" y="289" width="4" height="5" fill="#8a8a8a"/>
<rect x="17.5" y="289" width="5" height="5" fill="#555"/>
<rect x="7" y="299" width="8" height="6" fill="none" stroke="#bbb" stroke-width="0.9"/>
<rect x="9" y="297" width="8" height="6" fill="#424242" stroke="#bbb" stroke-width="0.9"/>
</svg>

<!-- dock -->
<div class="a" style="left:726px;top:29px;width:114px;height:3px;background:#303030"></div>
<div class="a" style="left:725px;top:32px;width:17px;height:111px;background:#414141;border:1px solid #353535"></div>
<div class="a" style="left:726px;top:32px;width:15px;height:2px;background:#2e2e2e"></div>
<svg class="a" style="left:725px;top:32px" width="17" height="111" viewBox="725 32 17 111">
<g fill="none" stroke="#cfcfcf" stroke-width="1">
<rect x="729.5" y="41" width="8" height="6"/>
<path d="M735,42 V46" />
<path d="M730,63 L733.5,55 L737,63 M731.5,59.5 H735.5"/>
<path d="M731,69 h5 M733.5,69 v6 M733.5,69 a1.5,1.5 0 0 0 0,3" stroke-width="1.3"/>
<ellipse cx="733.5" cy="84" rx="2" ry="4" transform="rotate(15 733.5 84)"/>
<rect x="729.5" y="97" width="8" height="8"/>
<path d="M731,101 l2,2 l3,-4"/>
<path d="M730,113 L737,117 L730,121Z" fill="#cfcfcf"/>
<circle cx="733.5" cy="134" r="2.6" fill="#9a9a9a" stroke="#9a9a9a"/><path d="M727,52.5H740M727,92.5H740M727,109.5H740M727,126H740" stroke="#363636" stroke-width="0.8"/>
</g>
</svg>
<div class="a" style="left:741px;top:32px;width:99px;height:427px;background:#4c4c4c;border-left:2px solid #2f2f2f"></div>

<!-- layers panel -->
<div class="a" style="left:743px;top:32px;width:97px;height:9px;background:#383838"></div>
<div class="a" style="left:743px;top:32px;width:18px;height:9px;background:#4c4c4c"></div>
<div class="t" style="left:744.5px;top:34.5px;font-size:4.9px;color:#f0f0f0;font-weight:bold">Layers</div>
<div class="t" style="left:765px;top:34.5px;font-size:5px;color:#a8a8a8">Info</div>
<div class="t" style="left:779px;top:34.5px;font-size:5px;color:#a8a8a8">Links</div>
<div class="t" style="left:796px;top:34.5px;font-size:5px;color:#a8a8a8">Artboards</div>
<div class="t" style="left:835px;top:33px;font-size:5px;color:#aaa">&#9776;</div>
<div class="a" style="left:743px;top:42.5px;width:97px;height:10.5px;background:#596173"></div>
<div class="a" style="left:752.5px;top:43px;width:1px;height:9.5px;background:#525a6b"></div><div class="a" style="left:763px;top:43px;width:1px;height:9.5px;background:#7a8196"></div>
<div class="a" style="left:746px;top:45.5px;width:5px;height:4px;border:1px solid #8d93a0;border-radius:50%"></div>
<div class="t" style="left:766.5px;top:44.5px;font-size:5px;color:#e8e8f0">&#9654;</div>
<div class="a" style="left:774px;top:44px;width:7px;height:7px;background:#fafafa"></div>
<div class="a" style="left:774px;top:46px;width:3px;height:2.5px;background:#222"></div>
<div class="t" style="left:783px;top:45px;font-size:5px;color:#dfe2ea">Layer 1</div>
<div class="a" style="left:826.5px;top:45.5px;width:5px;height:5px;border:1px solid #9aa0ad;border-radius:50%"></div>
<div class="a" style="left:743px;top:141.5px;width:97px;height:8px;background:#434343;border-top:1px solid #3a3a3a"></div>
<div class="t" style="left:745px;top:143px;font-size:4.9px;color:#e0e0e0">1 Layer</div>
<div class="t" style="left:783px;top:142px;font-size:5.5px;color:#9a9a9a;letter-spacing:4px">&#9635;&#9635;&#9641;&#9635;&#9633;</div>

<!-- swatches -->
<div class="a" style="left:743px;top:149.5px;width:97px;height:7.5px;background:#383838"></div>
<div class="a" style="left:743px;top:149.5px;width:23px;height:7.5px;background:#4c4c4c"></div>
<div class="t" style="left:745px;top:151px;font-size:4.6px;color:#f0f0f0;font-weight:bold">Swatches</div>
<div class="t" style="left:770px;top:151px;font-size:4.9px;color:#9a9a9a">Appearance</div>
<div class="t" style="left:835px;top:150px;font-size:5px;color:#aaa">&#9776;</div>
<svg class="a" style="left:744px;top:159px" width="14" height="14">
<rect x="0.5" y="0.5" width="9" height="9" fill="#f4f4f4" stroke="#777" stroke-width="0.5"/>
<path d="M1,9.5 L9.5,1" stroke="#c22" stroke-width="0.8"/>
<rect x="4" y="4" width="9" height="9" fill="#f4f4f4" stroke="#222" stroke-width="0.8"/>
<rect x="6.5" y="6.5" width="4" height="4" fill="#111"/>
</svg>
<div class="a" style="left:821px;top:162px;width:6px;height:6px;background:#777"></div>
<div class="a" style="left:831px;top:162px;width:6px;height:6px;border:1px solid #aaa;background:#666"></div>
<div class="a" style="left:744.90px;top:175.0px;width:5.7px;height:5.8px;background:#f0f0f0"></div><svg class="a" style="left:744.90px;top:175.0px" width="6" height="6"><path d="M0,6L6,0" stroke="#d22" stroke-width="0.8"/></svg><div class="a" style="left:750.35px;top:175.0px;width:5.7px;height:5.8px;background:#eeeeee"></div><div class="a" style="left:755.80px;top:175.0px;width:5.7px;height:5.8px;background:#ffffff"></div><div class="a" style="left:761.25px;top:175.0px;width:5.7px;height:5.8px;background:#000000"></div><div class="a" style="left:766.70px;top:175.0px;width:5.7px;height:5.8px;background:#e2382a"></div><div class="a" style="left:772.15px;top:175.0px;width:5.7px;height:5.8px;background:#f5e03a"></div><div class="a" style="left:777.60px;top:175.0px;width:5.7px;height:5.8px;background:#2fae55"></div><div class="a" style="left:783.05px;top:175.0px;width:5.7px;height:5.8px;background:#1fae9a"></div><div class="a" style="left:788.50px;top:175.0px;width:5.7px;height:5.8px;background:#1fa5d5"></div><div class="a" style="left:793.95px;top:175.0px;width:5.7px;height:5.8px;background:#1f3f9f"></div><div class="a" style="left:799.40px;top:175.0px;width:5.7px;height:5.8px;background:#8a2fa0"></div><div class="a" style="left:804.85px;top:175.0px;width:5.7px;height:5.8px;background:#d02a90"></div><div class="a" style="left:810.30px;top:175.0px;width:5.7px;height:5.8px;background:#e23040"></div><div class="a" style="left:815.75px;top:175.0px;width:5.7px;height:5.8px;background:#f05a3a"></div><div class="a" style="left:821.20px;top:175.0px;width:5.7px;height:5.8px;background:#f5903a"></div><div class="a" style="left:826.65px;top:175.0px;width:5.7px;height:5.8px;background:#f5ae55"></div><div class="a" style="left:744.90px;top:180.6px;width:5.7px;height:5.8px;background:#f0d040"></div><div class="a" style="left:750.35px;top:180.6px;width:5.7px;height:5.8px;background:#c8d845"></div><div class="a" style="left:755.80px;top:180.6px;width:5.7px;height:5.8px;background:#78c050"></div><div class="a" style="left:761.25px;top:180.6px;width:5.7px;height:5.8px;background:#55b050"></div><div class="a" style="left:766.70px;top:180.6px;width:5.7px;height:5.8px;background:#40a045"></div><div class="a" style="left:772.15px;top:180.6px;width:5.7px;height:5.8px;background:#20803f"></div><div class="a" style="left:777.60px;top:180.6px;width:5.7px;height:5.8px;background:#35a090"></div><div class="a" style="left:783.05px;top:180.6px;width:5.7px;height:5.8px;background:#3fb0c5"></div><div class="a" style="left:788.50px;top:180.6px;width:5.7px;height:5.8px;background:#40a0d8"></div><div class="a" style="left:793.95px;top:180.6px;width:5.7px;height:5.8px;background:#3070c0"></div><div class="a" style="left:799.40px;top:180.6px;width:5.7px;height:5.8px;background:#203890"></div><div class="a" style="left:804.85px;top:180.6px;width:5.7px;height:5.8px;background:#3f2a80"></div><div class="a" style="left:810.30px;top:180.6px;width:5.7px;height:5.8px;background:#60288f"></div><div class="a" style="left:815.75px;top:180.6px;width:5.7px;height:5.8px;background:#8f288f"></div><div class="a" style="left:821.20px;top:180.6px;width:5.7px;height:5.8px;background:#a02070"></div><div class="a" style="left:826.65px;top:180.6px;width:5.7px;height:5.8px;background:#c02050"></div><div class="a" style="left:744.90px;top:186.2px;width:5.7px;height:5.8px;background:#d03040"></div><div class="a" style="left:750.35px;top:186.2px;width:5.7px;height:5.8px;background:#d06080"></div><div class="a" style="left:755.80px;top:186.2px;width:5.7px;height:5.8px;background:#c8a898"></div><div class="a" style="left:761.25px;top:186.2px;width:5.7px;height:5.8px;background:#a89888"></div><div class="a" style="left:766.70px;top:186.2px;width:5.7px;height:5.8px;background:#807060"></div><div class="a" style="left:772.15px;top:186.2px;width:5.7px;height:5.8px;background:#605048"></div><div class="a" style="left:777.60px;top:186.2px;width:5.7px;height:5.8px;background:#c89870"></div><div class="a" style="left:783.05px;top:186.2px;width:5.7px;height:5.8px;background:#b07050"></div><div class="a" style="left:788.50px;top:186.2px;width:5.7px;height:5.8px;background:#906040"></div><div class="a" style="left:793.95px;top:186.2px;width:5.7px;height:5.8px;background:#704030"></div><div class="a" style="left:799.40px;top:186.2px;width:5.7px;height:5.8px;background:#503020"></div><div class="a" style="left:804.85px;top:186.2px;width:5.7px;height:5.8px;background:#302010"></div><div class="a" style="left:810.30px;top:186.2px;width:5.7px;height:5.8px;background:#e8e8e8"></div><div class="a" style="left:815.75px;top:186.2px;width:5.7px;height:5.8px;background:#2a2a2a"></div><div class="a" style="left:821.20px;top:186.2px;width:5.7px;height:5.8px;background:#e8b860"></div><div class="a" style="left:826.65px;top:186.2px;width:5.7px;height:5.8px;background:#a8c8e8"></div>
<div class="a" style="left:744.9px;top:192px;width:5.6px;height:5.6px;background:#111"></div><div class="a" style="left:745.9px;top:193px;width:3.6px;height:3.6px;background:#fff;border-radius:50%"></div><div class="a" style="left:750.4px;top:192px;width:5.6px;height:5.6px;background:#dfe8d0;border:1px solid #bbb"></div><div class="a" style="left:755.9px;top:192px;width:5.6px;height:5.6px;background:#c8b8a0"></div>
<div class="a" style="left:744.9px;top:198.5px;width:5.6px;height:5.4px;background:#9a9a9a"></div><div class="a" style="left:745.9px;top:199.5px;width:3px;height:1.2px;background:#ddd"></div><div class="a" style="left:750.35px;top:198.5px;width:5.7px;height:5.6px;background:#050505"></div><div class="a" style="left:755.80px;top:198.5px;width:5.7px;height:5.6px;background:#303030"></div><div class="a" style="left:761.25px;top:198.5px;width:5.7px;height:5.6px;background:#454545"></div><div class="a" style="left:766.70px;top:198.5px;width:5.7px;height:5.6px;background:#5c5c5c"></div><div class="a" style="left:772.15px;top:198.5px;width:5.7px;height:5.6px;background:#737373"></div><div class="a" style="left:777.60px;top:198.5px;width:5.7px;height:5.6px;background:#8a8a8a"></div><div class="a" style="left:783.05px;top:198.5px;width:5.7px;height:5.6px;background:#9e9e9e"></div><div class="a" style="left:788.50px;top:198.5px;width:5.7px;height:5.6px;background:#b2b2b2"></div><div class="a" style="left:793.95px;top:198.5px;width:5.7px;height:5.6px;background:#c4c4c4"></div><div class="a" style="left:799.40px;top:198.5px;width:5.7px;height:5.6px;background:#d6d6d6"></div><div class="a" style="left:804.85px;top:198.5px;width:5.7px;height:5.6px;background:#e6e6e6"></div><div class="a" style="left:810.30px;top:198.5px;width:5.7px;height:5.6px;background:#f5f5f5"></div>
<div class="a" style="left:744.9px;top:205.8px;width:5.6px;height:5.4px;background:#9a9a9a"></div><div class="a" style="left:745.9px;top:206.8px;width:3px;height:1.2px;background:#ddd"></div><div class="a" style="left:750.35px;top:205.8px;width:5.7px;height:5.6px;background:#e04a30"></div><div class="a" style="left:755.80px;top:205.8px;width:5.7px;height:5.6px;background:#f08a30"></div><div class="a" style="left:761.25px;top:205.8px;width:5.7px;height:5.6px;background:#f0d040"></div><div class="a" style="left:766.70px;top:205.8px;width:5.7px;height:5.6px;background:#40a850"></div><div class="a" style="left:772.15px;top:205.8px;width:5.7px;height:5.6px;background:#2858b0"></div><div class="a" style="left:777.60px;top:205.8px;width:5.7px;height:5.6px;background:#6a3aa0"></div>
<div class="a" style="left:834px;top:173px;width:1px;height:80px;background:#3c3c3c"></div>
<div class="a" style="left:743px;top:256px;width:97px;height:9px;background:#434343;border-top:1px solid #3c3c3c"></div>
<div class="t" style="left:746px;top:257px;font-size:5.5px;color:#a0a0a0;letter-spacing:7px">&#9635;&#10005;</div>
<div class="t" style="left:784px;top:257px;font-size:5.5px;color:#a0a0a0;letter-spacing:6px">&#9635;&#9633;&#9641;&#9633;&#9633;</div>

<!-- transparency / color -->
<div class="a" style="left:743px;top:266.5px;width:97px;height:6.5px;background:#383838"></div>
<div class="a" style="left:777.5px;top:266.5px;width:19px;height:6.5px;background:#4c4c4c"></div>
<div class="t" style="left:745px;top:267.5px;font-size:4.8px;color:#9a9a9a">Transparency</div>
<div class="t" style="left:781px;top:267.5px;font-size:4.8px;color:#f0f0f0;font-weight:bold">Color</div>
<div class="t" style="left:835px;top:266.5px;font-size:5px;color:#aaa">&#9776;</div>
<div class="a" style="left:745px;top:276px;width:3px;height:3px;background:#ddd"></div>
<svg class="a" style="left:744px;top:283px" width="14" height="14">
<rect x="0.5" y="0.5" width="9" height="9" fill="#f4f4f4" stroke="#777" stroke-width="0.5"/>
<path d="M1,9.5 L9.5,1" stroke="#c22" stroke-width="0.8"/>
<rect x="4" y="4" width="9" height="9" fill="#f4f4f4" stroke="#222" stroke-width="0.8"/>
<rect x="6.5" y="6.5" width="4" height="4" fill="#5a1a1a"/>
</svg>
<div class="t" style="left:764px;top:278.5px;font-size:5px;color:#d8d8d8">C</div>
<div class="t" style="left:764px;top:288.8px;font-size:5px;color:#d8d8d8">M</div>
<div class="t" style="left:764.5px;top:299px;font-size:5px;color:#d8d8d8">Y</div>
<div class="t" style="left:764.5px;top:309.2px;font-size:5px;color:#d8d8d8">K</div>
<div class="a" style="left:771px;top:283.5px;width:48px;height:1px;background:#404040"></div>
<div class="a" style="left:771px;top:293.8px;width:48px;height:1px;background:#404040"></div>
<div class="a" style="left:771px;top:304px;width:48px;height:1px;background:#404040"></div>
<div class="a" style="left:771px;top:314.2px;width:48px;height:1px;background:#404040"></div>
<div class="a" style="left:821px;top:277.5px;width:13px;height:7.5px;background:#a2a2a2"></div>
<div class="a" style="left:821px;top:288px;width:13px;height:7.5px;background:#a2a2a2"></div>
<div class="a" style="left:821px;top:298.3px;width:13px;height:7.5px;background:#a2a2a2"></div>
<div class="a" style="left:821px;top:308.5px;width:13px;height:7.5px;background:#a2a2a2"></div>
<div class="t" style="left:836px;top:279px;font-size:4.5px;line-height:10.3px;color:#ccc">%<br>%<br>%<br>%</div>
<div class="a" style="left:756px;top:311px;width:5.5px;height:5.5px;background:#111;border:1px solid #ddd"></div>
<div class="a" style="left:746px;top:321px;width:5px;height:5px;border-radius:50%;background:#ddd"></div>
<div class="a" style="left:751px;top:321px;width:3.5px;height:5px;background:#000"></div>
<div class="a" style="left:755px;top:320.5px;width:6px;height:6px;background:#fff"></div>
<div class="a" style="left:744.5px;top:329.5px;width:92px;height:50px;background:#2e2e2e"></div><div class="a" style="left:745.5px;top:330.5px;width:90px;height:48px;background:linear-gradient(to bottom, rgba(255,255,255,1) 0%, rgba(255,255,255,0.6) 15%, rgba(255,255,255,0) 48%, rgba(0,0,0,0) 55%, rgba(0,0,0,0.55) 80%, rgba(0,0,0,1) 100%), linear-gradient(to right, #e8302a 0%, #f08a30 9%, #f5e040 17%, #8cc640 26%, #48b050 35%, #50b8e0 52%, #3050b0 66%, #70409c 78%, #d03890 90%, #e02850 100%)"></div>

<!-- align -->
<div class="a" style="left:743px;top:383px;width:97px;height:6.5px;background:#383838"></div>
<div class="a" style="left:743px;top:383px;width:17px;height:6.5px;background:#4c4c4c"></div>
<div class="t" style="left:745px;top:384px;font-size:4.8px;color:#f0f0f0;font-weight:bold">&#8597;Align</div>
<div class="t" style="left:834px;top:383.5px;font-size:5px;color:#aaa">&#9776;</div>
<div class="t" style="left:745px;top:392.5px;font-size:4.6px;color:#e0e0e0;font-weight:bold">Align Objects:</div>
<div class="t" style="left:745px;top:415.5px;font-size:4.6px;color:#e0e0e0;font-weight:bold">Distribute Objects:</div>

<svg class="a" style="left:746.0px;top:401.0px" width="7" height="7"><rect x="0" y="0.5" width="7" height="1" fill="#c8c8c8"/><rect x="1" y="2" width="5" height="2" fill="#d0d0d0"/><rect x="0.5" y="4.5" width="6" height="2" fill="#aaa"/></svg><svg class="a" style="left:760.9px;top:401.0px" width="7" height="7"><rect x="3" y="0" width="1" height="7" fill="#999"/><rect x="1" y="1" width="5" height="2.5" fill="#d0d0d0"/><rect x="0" y="4" width="7" height="2.5" fill="#b0b0b0"/></svg><svg class="a" style="left:777.0px;top:401.0px" width="7" height="7"><rect x="0" y="6" width="7" height="1" fill="#c8c8c8"/><rect x="1" y="1" width="5" height="2" fill="#d0d0d0"/><rect x="0.5" y="3.5" width="6" height="2" fill="#aaa"/></svg><svg class="a" style="left:801.4px;top:401.0px" width="7" height="7"><rect x="0.5" y="0" width="1" height="7" fill="#c8c8c8"/><rect x="2" y="1" width="2" height="5" fill="#d0d0d0"/><rect x="4.5" y="0.5" width="2" height="6" fill="#aaa"/></svg><svg class="a" style="left:815.7px;top:401.0px" width="7" height="7"><circle cx="2.5" cy="3.5" r="2.2" fill="none" stroke="#c8c8c8" stroke-width="0.9"/><rect x="3.5" y="2" width="3.5" height="3" fill="#d0d0d0"/></svg><svg class="a" style="left:830.5px;top:401.0px" width="7" height="7"><rect x="6" y="0" width="1" height="7" fill="#c8c8c8"/><rect x="1" y="1" width="3.5" height="2.5" fill="#d0d0d0"/><rect x="0.5" y="4" width="5" height="2.5" fill="#aaa"/></svg><svg class="a" style="left:746.0px;top:424.2px" width="7" height="7"><rect x="0" y="0.5" width="7" height="1" fill="#c8c8c8"/><rect x="0" y="5.5" width="7" height="1" fill="#c8c8c8"/><rect x="2" y="2" width="3" height="3" fill="#d0d0d0"/></svg><svg class="a" style="left:760.9px;top:424.2px" width="7" height="7"><rect x="0" y="3" width="7" height="1" fill="#c8c8c8"/><rect x="1.5" y="1" width="4" height="1.5" fill="#d0d0d0"/><rect x="1.5" y="4.5" width="4" height="1.5" fill="#aaa"/></svg><svg class="a" style="left:777.0px;top:424.2px" width="7" height="7"><rect x="0" y="6" width="7" height="1" fill="#c8c8c8"/><path d="M3.5,0 L6,3 H1Z" fill="#d0d0d0"/><rect x="1" y="3.5" width="5" height="2" fill="#aaa"/></svg><svg class="a" style="left:801.4px;top:424.2px" width="7" height="7"><rect x="0.5" y="0" width="1" height="7" fill="#c8c8c8"/><path d="M2.5,1 L6,3.5 L2.5,6Z" fill="#d0d0d0"/></svg><svg class="a" style="left:815.7px;top:424.2px" width="7" height="7"><rect x="3" y="0" width="1" height="7" fill="#c8c8c8"/><rect x="0.5" y="1.5" width="2" height="4" fill="#d0d0d0"/><path d="M4.5,1.5 L7,3.5 L4.5,5.5Z" fill="#aaa"/></svg><svg class="a" style="left:830.5px;top:424.2px" width="7" height="7"><rect x="5.5" y="0" width="1" height="7" fill="#c8c8c8"/><path d="M4.5,1 L1,3.5 L4.5,6Z" fill="#d0d0d0"/></svg>
<!-- doc info / attributes -->
<div class="a" style="left:743px;top:437px;width:97px;height:6.5px;background:#383838"></div>
<div class="a" style="left:743px;top:436.5px;width:97px;height:1px;background:#2c2c2c"></div>
<div class="a" style="left:779.5px;top:437px;width:29px;height:6.5px;background:#4c4c4c"></div>
<div class="t" style="left:745px;top:438px;font-size:4.7px;color:#a8a8a8">Document Info</div>
<div class="t" style="left:781px;top:438px;font-size:4.6px;color:#f0f0f0;font-weight:bold">&#8597;Attributes</div>
<div class="t" style="left:834px;top:437.5px;font-size:5px;color:#aaa">&#9776;</div>
<div class="a" style="left:746px;top:447px;width:4px;height:4px;border:1px solid #5a5a5a"></div>
<div class="t" style="left:752px;top:446px;font-size:5.2px;color:#6a6a6a">Overprint Fill</div>
<div class="a" style="left:746px;top:455px;width:4px;height:4px;border:1px solid #5a5a5a"></div>
<div class="t" style="left:752px;top:454px;font-size:5.2px;color:#6a6a6a">Overprint Stroke</div>
<!-- bottom bar -->
<div class="a" style="left:0;top:459px;width:840px;height:14px;background:#090909"></div><div class="a" style="left:0;top:459px;width:741px;height:3px;background:#2a2a2a"></div><div class="a" style="left:23px;top:459.5px;width:17px;height:2px;background:#b0b0b0"></div><div class="a" style="left:64px;top:459.5px;width:16px;height:2px;background:#909090"></div><div class="a" style="left:465px;top:459.5px;width:6px;height:2px;background:#888"></div>
</div>
</body></html>
